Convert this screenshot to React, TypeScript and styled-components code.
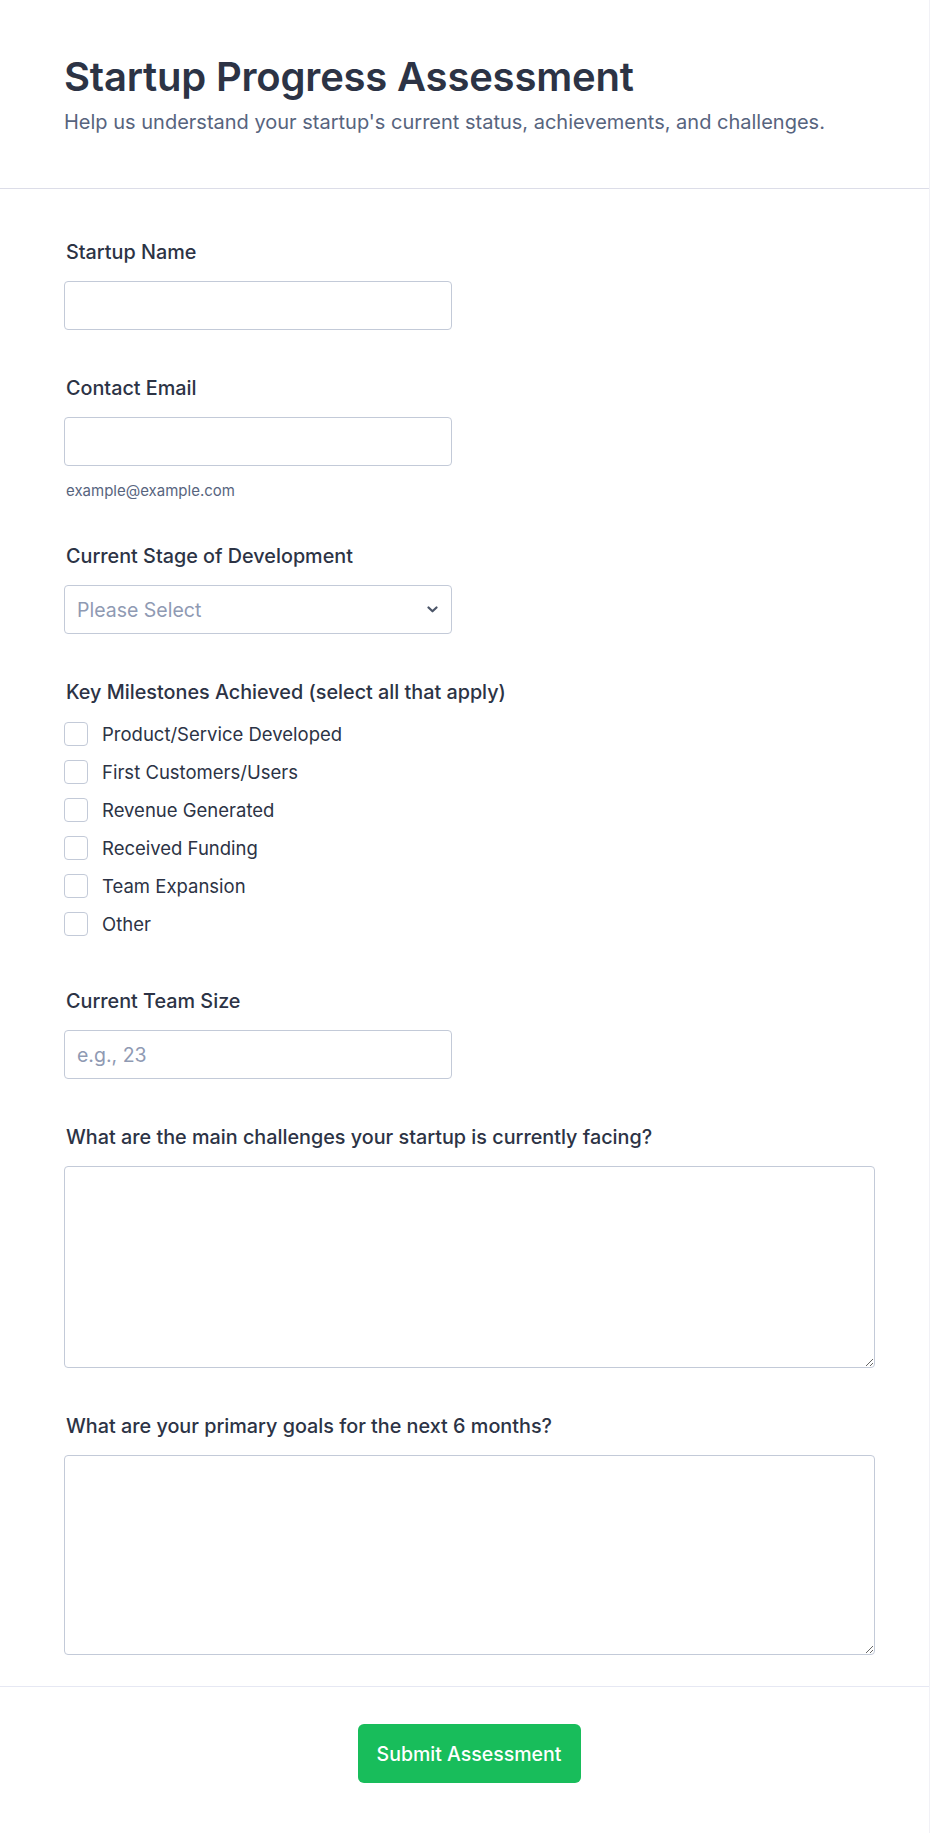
import React from "react";
import styled, { createGlobalStyle } from "styled-components";

const Global = createGlobalStyle`
  * { box-sizing: border-box; }
  html, body { margin: 0; padding: 0; background: #ffffff; }
  body { font-family: Inter, "Noto Sans", Arial, sans-serif; color: #2c3345; }
`;

const Card = styled.div`
  width: 930px;
  background: #fff;
  border-right: 1px solid #f1f1f6;
  border-bottom: 1px solid #f1f1f6;
`;

const Header = styled.header`
  padding: 53px 64px 0;
  height: 189px;
  border-bottom: 1px solid #dcdde8;
`;

const Title = styled.h1`
  margin: 0;
  font-size: 40px;
  line-height: 48px;
  font-weight: 600;
  letter-spacing: -0.2px;
  color: #2c3345;
`;

const Subtitle = styled.p`
  margin: 8px 0 0;
  font-size: 20px;
  line-height: 26px;
  color: #57647e;
`;

const Form = styled.form`
  display: flex;
  flex-direction: column;
  gap: 46px;
  padding: 51px 55px 31px 64px;
  border-bottom: 1px solid #e6e8f3;
`;

const Field = styled.div<{ $gap?: number; $extraTop?: number }>`
  display: flex;
  flex-direction: column;
  gap: ${(p) => p.$gap ?? 17}px;
  margin-top: ${(p) => p.$extraTop ?? 0}px;
`;

const Label = styled.label`
  padding-left: 2px;
  font-size: 19.8px;
  line-height: 24px;
  font-weight: 500;
  color: #2c3345;
`;

const Input = styled.input`
  width: 388px;
  height: 49px;
  border: 1px solid #c3cad8;
  border-radius: 4px;
  padding: 0 12px;
  font-family: inherit;
  font-size: 19.5px;
  color: #2c3345;
  background: #fff;
  &::placeholder { color: #8f9ab3; }
`;

const Helper = styled.div`
  margin-top: 0;
  padding-left: 2px;
  font-size: 15px;
  line-height: 15px;
  color: #57647e;
`;

const SelectBox = styled.div`
  width: 388px;
  height: 49px;
  border: 1px solid #c3cad8;
  border-radius: 4px;
  padding: 0 13px 0 12px;
  display: flex;
  align-items: center;
  justify-content: space-between;
  font-size: 19.5px;
  color: #8f9ab3;
`;

const Checklist = styled.div`
  display: flex;
  flex-direction: column;
  gap: 14px;
`;

const CheckRow = styled.label`
  display: flex;
  align-items: center;
  gap: 14px;
  height: 24px;
  font-size: 18.5px;
  color: #2c3345;
`;

const Box = styled.span`
  width: 24px;
  height: 24px;
  border: 1px solid #c3cad8;
  border-radius: 4px;
  background: #fff;
  flex-shrink: 0;
`;

const TextArea = styled.textarea<{ $h: number }>`
  width: 811px;
  height: ${(p) => p.$h}px;
  border: 1px solid #c3cad8;
  border-radius: 4px;
  padding: 10px 13px;
  font-family: inherit;
  font-size: 16px;
  resize: vertical;
  display: block;
`;

const Footer = styled.div`
  display: flex;
  justify-content: center;
  padding: 37px 55px 50px 64px;
`;

const SubmitButton = styled.button`
  width: 223px;
  height: 59px;
  border: none;
  border-radius: 6px;
  background: #18bd5b;
  color: #fff;
  font-family: inherit;
  font-size: 19.5px;
  font-weight: 500;
  cursor: pointer;
`;

const milestones = [
  "Product/Service Developed",
  "First Customers/Users",
  "Revenue Generated",
  "Received Funding",
  "Team Expansion",
  "Other",
];

export default function App() {
  return (
    <>
      <Global />
      <Card>
        <Header>
          <Title>Startup Progress Assessment</Title>
          <Subtitle>
            Help us understand your startup's current status, achievements, and challenges.
          </Subtitle>
        </Header>
        <Form onSubmit={(e) => e.preventDefault()}>
          <Field>
            <Label>Startup Name</Label>
            <Input type="text" />
          </Field>
          <Field>
            <Label>Contact Email</Label>
            <Input type="email" />
            <Helper>example@example.com</Helper>
          </Field>
          <Field>
            <Label>Current Stage of Development</Label>
            <SelectBox>
              <span>Please Select</span>
              <svg width="11" height="7" viewBox="0 0 11 7" fill="none">
                <path d="M1.5 1.5 L5.5 5.3 L9.5 1.5" stroke="#4b5568" strokeWidth="2.2" strokeLinecap="round" strokeLinejoin="round" />
              </svg>
            </SelectBox>
          </Field>
          <Field $gap={18}>
            <Label>Key Milestones Achieved (select all that apply)</Label>
            <Checklist>
              {milestones.map((m) => (
                <CheckRow key={m}>
                  <Box />
                  {m}
                </CheckRow>
              ))}
            </Checklist>
          </Field>
          <Field $extraTop={7}>
            <Label>Current Team Size</Label>
            <Input type="text" placeholder="e.g., 23" />
          </Field>
          <Field>
            <Label>What are the main challenges your startup is currently facing?</Label>
            <TextArea $h={202} />
          </Field>
          <Field>
            <Label>What are your primary goals for the next 6 months?</Label>
            <TextArea $h={200} />
          </Field>
        </Form>
        <Footer>
          <SubmitButton type="submit">Submit Assessment</SubmitButton>
        </Footer>
      </Card>
    </>
  );
}
